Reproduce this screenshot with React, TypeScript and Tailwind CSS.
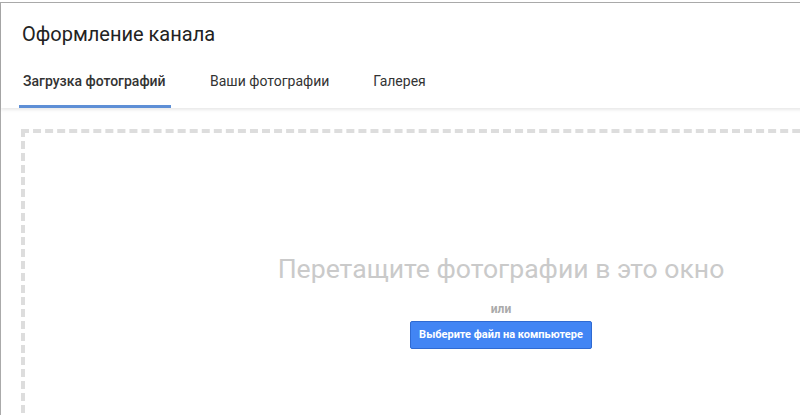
import React from "react";

export default function App() {
  return (
    <div className="w-[800px] h-[415px] overflow-hidden bg-white" style={{ fontFamily: "Roboto, 'Noto Sans', sans-serif" }}>
      <div className="mt-[2px] h-[413px] w-[1000px] border-t border-l border-[#aaaaaa] bg-white">
        <div className="relative z-10 h-[105px] bg-white shadow-[0_2px_3px_rgba(0,0,0,0.09)]">
          <div className="pl-[21px] pt-[18px] text-[20px] leading-[26px] text-[#222222]">Оформление канала</div>
          <div className="mt-[24px] flex pl-[18px] text-[14px] leading-[20px]">
            <div className="flex h-[37px] w-[152px] flex-col justify-between">
              <div className="pl-[4px] font-medium text-[#333333]">Загрузка фотографий</div>
              <div className="h-[3px] bg-[#5e8fd6]" />
            </div>
            <div className="ml-[39px] text-[#333333]">Ваши фотографии</div>
            <div className="ml-[44px] text-[#333333]">Галерея</div>
          </div>
        </div>
        <div className="ml-[20px] mt-[21px] h-[320px] w-[960px] border-4 border-dashed border-[#dddddd]">
          <div className="flex flex-col items-center pt-[120px]">
            <div className="text-[26.6px] leading-[32px] text-[#cacaca]">Перетащите фотографии в это окно</div>
            <div className="mt-[17px] text-[12px] font-bold leading-[14px] text-[#aaaaaa]">или</div>
            <button className="mt-[5px] h-[28px] w-[182px] rounded-[2px] border border-[#2f6ad2] bg-[#4285f4] text-[11px] font-bold text-white">
              Выберите файл на компьютере
            </button>
          </div>
        </div>
      </div>
    </div>
  );
}
